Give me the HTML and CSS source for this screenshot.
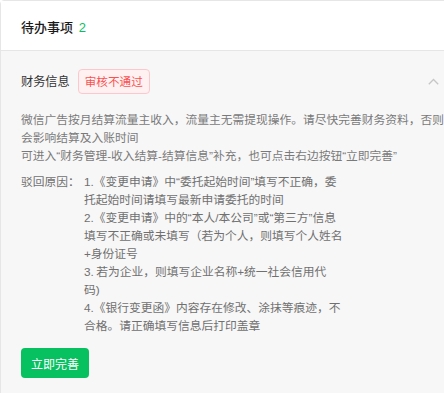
FILE: index.html
```html
<!DOCTYPE html>
<html lang="zh-CN">
<head>
  <meta charset="UTF-8" />
  <meta name="viewport" content="width=device-width, initial-scale=1.0" />
  <title>待办事项</title>
  <link rel="stylesheet" href="styles.css">
</head>
<body>
  <div class="card">
    <div class="card-hd">
      <h2 class="card-title">待办事项 <span class="count">2</span></h2>
    </div>

    <div class="card-bd">
      <div class="item-hd">
        <span class="item-title">财务信息</span>
        <span class="tag">审核不通过</span>
        <svg class="arrow" width="11" height="7" viewBox="0 0 11 7">
          <polyline points="0.8,6.2 5.5,1.5 10.2,6.2" fill="none" stroke="#c6c6c6" stroke-width="1.3" />
        </svg>
      </div>

      <p class="desc">
        微信广告按月结算流量主收入，流量主无需提现操作。请尽快完善财务资料，否则会影响结算及入账时间<br/>
        可进入“财务管理-收入结算-结算信息”补充，也可点击右边按钮“立即完善”
      </p>

      <div class="reason">
        <span class="reason-label">驳回原因：</span>
        <div class="reason-list">
          <p>1.《变更申请》中“委托起始时间”填写不正确，委托起始时间请填写最新申请委托的时间</p>
          <p>2.《变更申请》中的“本人/本公司”或“第三方”信息填写不正确或未填写（若为个人，则填写个人姓名+身份证号</p>
          <p>3.&thinsp;若为企业，则填写企业名称+统一社会信用代<br/>码)</p>
          <p>4.《银行变更函》内容存在修改、涂抹等痕迹，不合格。请正确填写信息后打印盖章</p>
        </div>
      </div>

      <button class="btn">立即完善</button>
    </div>
  </div>
</body>
</html>
```

FILE: styles.css
```css
* {
  box-sizing: border-box;
  margin: 0;
  padding: 0;
}
html, body {
  overflow: hidden;
}
body {
  font-family: "Liberation Sans", "Noto Sans CJK SC", sans-serif;
  background: #fff;
  color: #333;
}
.card {
  width: 470px;
  border: 1px solid #e6e6e6;
  border-radius: 4px 0 0 0;
  background: #f7f7f7;
  min-height: 420px;
}
.card-hd {
  background: #fff;
  height: 50px;
  padding: 0 20px;
  display: flex;
  align-items: center;
  border-bottom: 1px solid #e6e6e6;
}
.card-title {
  font-size: 13px;
  font-weight: 500;
  color: #1a1a1a;
  padding-top: 2px;
}
.card-title .count {
  color: #07c160;
  font-weight: 400;
  margin-left: 2px;
}
.card-bd {
  padding: 17px 20px 20px;
}
.item-hd {
  display: flex;
  align-items: center;
  height: 26px;
}
.item-title {
  font-size: 12.2px;
  color: #333;
}
.tag {
  margin-left: 8px;
  height: 25px;
  line-height: 23px;
  padding: 0 6px;
  font-size: 11.6px;
  color: #fa5151;
  background: #fff1f2;
  border: 1px solid #fcc8cd;
  border-radius: 4px;
}
.arrow {
  margin-left: auto;
  margin-right: 10px;
}
.desc {
  margin-top: 17px;
  font-size: 11.75px;
  line-height: 18px;
  color: #7a7a7a;
}
.reason {
  display: flex;
  margin-top: 8px;
  font-size: 11.75px;
  line-height: 18px;
  color: #707070;
}
.reason-label {
  width: 63px;
  flex-shrink: 0;
}
.reason-list {
  width: 259.5px;
}
.btn {
  margin-top: 13px;
  height: 30px;
  padding: 0 10px;
  font-family: inherit;
  font-size: 12px;
  color: #fff;
  background: #07c160;
  border: none;
  border-radius: 4px;
  cursor: pointer;
}
```
